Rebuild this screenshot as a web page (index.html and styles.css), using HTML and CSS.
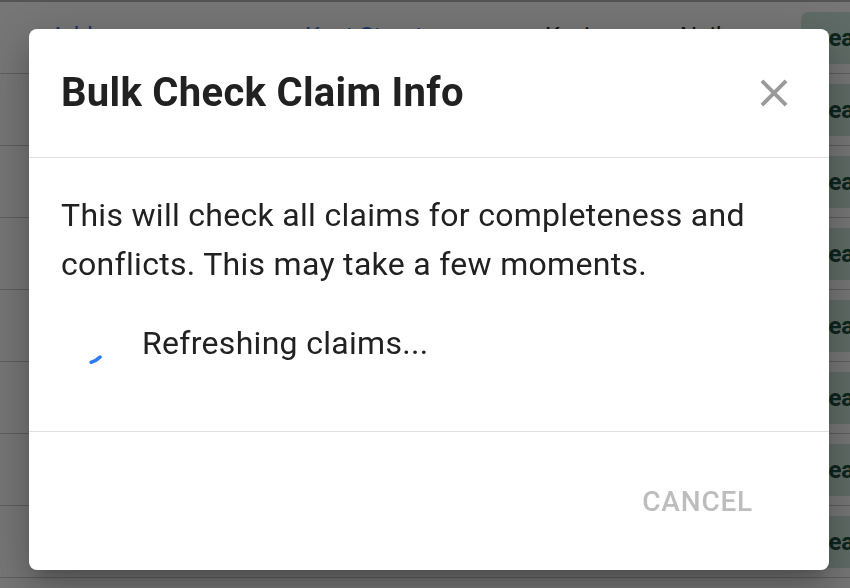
FILE: index.html
```html
<!DOCTYPE html>
<html lang="en">
  <head>
    <meta charset="UTF-8" />
    <meta name="viewport" content="width=device-width, initial-scale=1.0" />
    <title>Bulk Check Claim Info</title>
    <link rel="stylesheet" href="styles.css">
  </head>
  <body>
    <div class="page">
      <div class="table">
        <div class="row">
          <span class="cell link">Address</span>
          <span class="cell link">Kent Street</span>
          <span class="cell">Kevin</span>
          <span class="cell">Neil</span>
          <span class="chip">Ready</span>
        </div>
        <div class="row"><span></span><span></span><span></span><span></span><span class="chip">Ready</span></div>
        <div class="row"><span></span><span></span><span></span><span></span><span class="chip">Ready</span></div>
        <div class="row"><span></span><span></span><span></span><span></span><span class="chip">Ready</span></div>
        <div class="row"><span></span><span></span><span></span><span></span><span class="chip">Ready</span></div>
        <div class="row"><span></span><span></span><span></span><span></span><span class="chip">Ready</span></div>
        <div class="row"><span></span><span></span><span></span><span></span><span class="chip">Ready</span></div>
        <div class="row"><span></span><span></span><span></span><span></span><span class="chip">Ready</span></div>
      </div>
    </div>

    <div class="backdrop">
      <div class="dialog">
        <div class="dialog-title">
          <h2>Bulk Check Claim Info</h2>
          <button class="close" aria-label="close">
            <svg viewBox="0 0 24 24" width="46" height="46">
              <path d="M19 6.41 17.59 5 12 10.59 6.41 5 5 6.41 10.59 12 5 17.59 6.41 19 12 13.41 17.59 19 19 17.59 13.41 12z" />
            </svg>
          </button>
        </div>
        <div class="dialog-content">
          <p>This will check all claims for completeness and conflicts. This may take a few moments.</p>
          <div class="progress">
            <svg class="spinner" viewBox="0 0 48 48" width="48" height="48">
              <path d="M30.2 43.3 A20 20 0 0 0 39.1 38.1" />
            </svg>
            <span>Refreshing claims...</span>
          </div>
        </div>
        <div class="dialog-actions">
          <button class="btn" disabled>Cancel</button>
        </div>
      </div>
    </div>
  </body>
</html>
```

FILE: styles.css
```css
* {
  box-sizing: border-box;
}

body {
  margin: 0;
  font-family: "Roboto", "Liberation Sans", sans-serif;
  background-color: #ececec;
  overflow: hidden;
}

/* page behind the dialog */
.page {
  width: 100%;
  height: 100vh;
  overflow: hidden;
}

.table {
  border-top: 2px solid #a8a8a8;
}

.row {
  display: grid;
  grid-template-columns: 255px 240px 135px 121px 1fr;
  align-items: center;
  height: 72px;
  padding-left: 50px;
  border-bottom: 1px solid #bcbcbc;
  overflow: hidden;
}

.cell {
  font-size: 24px;
  margin-bottom: 3px;
  color: #222;
  white-space: nowrap;
}

.cell.link {
  color: #3b6fd0;
}

.chip {
  display: flex;
  align-items: center;
  height: 52px;
  padding-left: 12px;
  border-radius: 8px 0 0 8px;
  background-color: #bed6cc;
  color: #1c4a35;
  font-size: 24px;
  font-weight: 700;
  white-space: nowrap;
  overflow: hidden;
}

/* dialog */
.backdrop {
  position: fixed;
  inset: 0;
  background-color: rgba(0, 0, 0, 0.5);
  padding: 29px 0 0 29px;
}

.dialog {
  width: 800px;
  height: 541px;
  background-color: #fff;
  border-radius: 8px;
  display: flex;
  flex-direction: column;
  box-shadow: 0 11px 15px -7px rgba(0, 0, 0, 0.2),
    0 24px 38px 3px rgba(0, 0, 0, 0.14), 0 9px 46px 8px rgba(0, 0, 0, 0.12);
}

.dialog-title {
  display: flex;
  justify-content: space-between;
  align-items: center;
  height: 129px;
  padding: 0 32px 0 32px;
  border-bottom: 1px solid #e0e0e0;
}

.dialog-title h2 {
  margin: 0;
  font-size: 40px;
  font-weight: 700;
  line-height: 64px;
  letter-spacing: 0.3px;
  color: #212121;
}

.close {
  width: 46px;
  height: 46px;
  padding: 0;
  border: 0;
  background: none;
}

.close svg {
  display: block;
  fill: #9a9a9a;
}

.dialog-content {
  height: 274px;
  padding: 33px 32px 0 32px;
  border-bottom: 1px solid #e0e0e0;
}

.dialog-content p {
  margin: 0;
  font-size: 32px;
  line-height: 49px;
  letter-spacing: 0.3px;
  color: #212121;
}

.progress {
  display: flex;
  align-items: center;
  height: 80px;
  margin-top: 14px;
  font-size: 32px;
  letter-spacing: 0.3px;
  color: #212121;
}

.spinner {
  flex: none;
  margin-right: 33px;
}

.spinner path {
  fill: none;
  stroke: #2f7cf6;
  stroke-width: 3.6;
  stroke-linecap: round;
}

.dialog-actions {
  flex: 1;
  display: flex;
  justify-content: flex-end;
  align-items: center;
  padding-right: 60px;
}

.btn {
  padding: 12px 16px;
  border: 0;
  background: none;
  font-family: inherit;
  font-size: 28px;
  font-weight: 500;
  letter-spacing: 0.8px;
  text-transform: uppercase;
  color: #bdbdbd;
}
```
